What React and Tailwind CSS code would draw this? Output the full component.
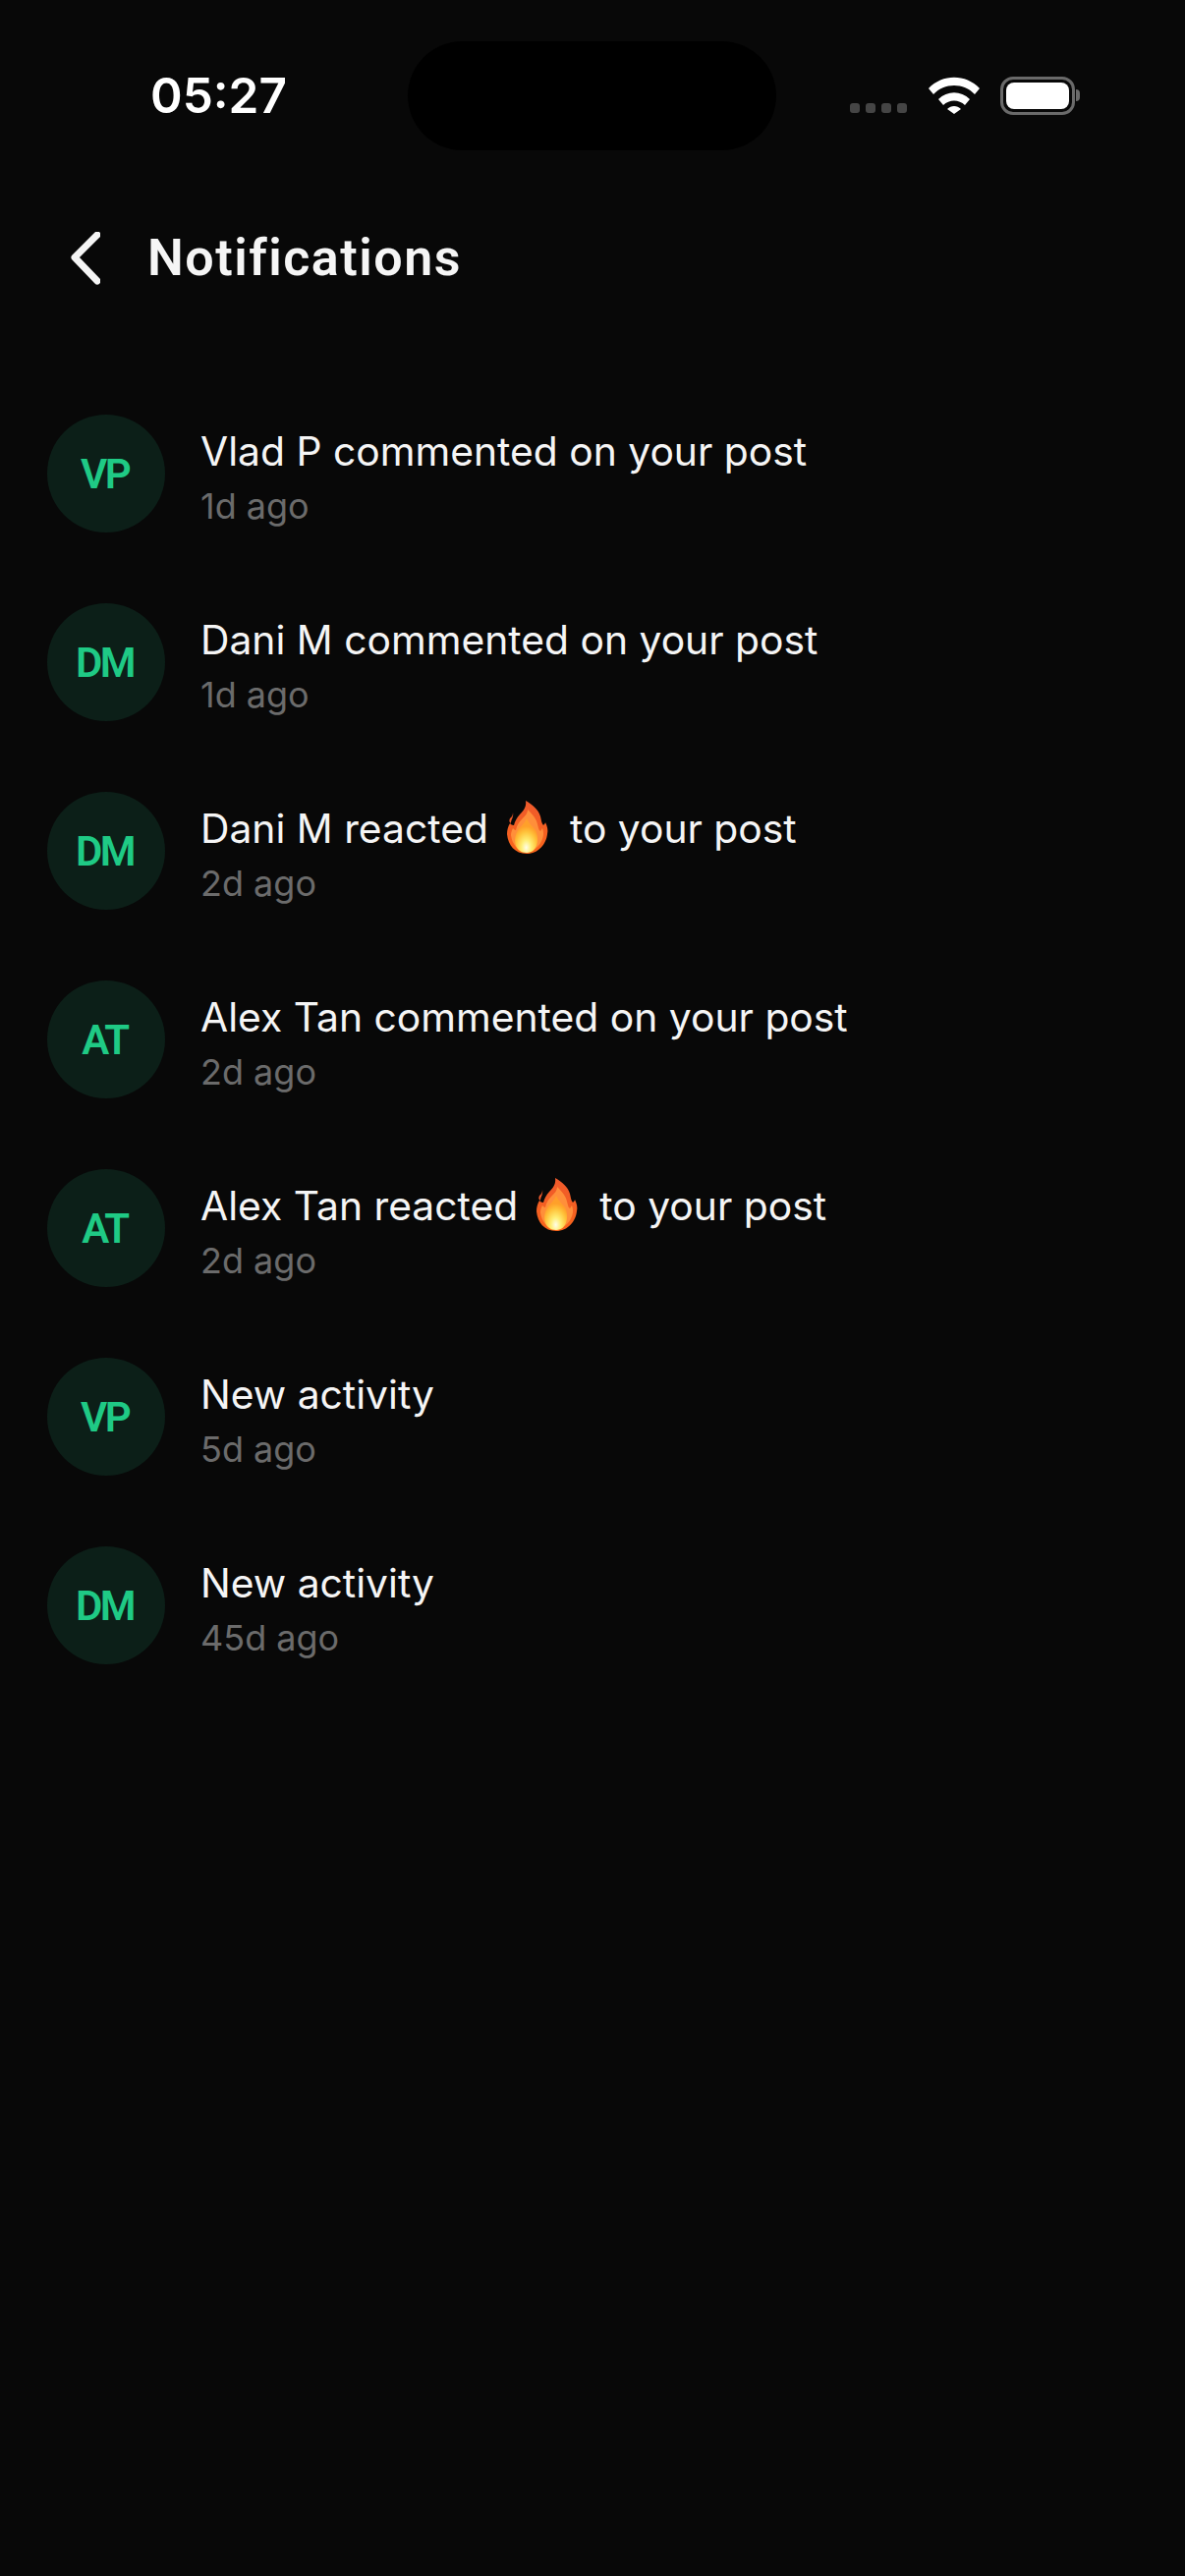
const items = [
  { initials: "VP", before: "Vlad P commented on your post", time: "1d ago" },
  { initials: "DM", before: "Dani M commented on your post", time: "1d ago" },
  { initials: "DM", before: "Dani M reacted", after: "to your post", time: "2d ago" },
  { initials: "AT", before: "Alex Tan commented on your post", time: "2d ago" },
  { initials: "AT", before: "Alex Tan reacted", after: "to your post", time: "2d ago" },
  { initials: "VP", before: "New activity", time: "5d ago" },
  { initials: "DM", before: "New activity", time: "45d ago" },
];

function Flame() {
  return (
    <svg width="42" height="54" viewBox="0 0 42 54" className="ml-[19px] mr-[22px] shrink-0 mb-[4px]">
      <defs>
        <radialGradient id="flameCore" cx="0.5" cy="0.85" r="0.62">
          <stop offset="0" stopColor="#fffde8" />
          <stop offset="0.35" stopColor="#ffee75" />
          <stop offset="0.75" stopColor="#ffc23a" />
          <stop offset="1" stopColor="#ffa02a" />
        </radialGradient>
        <linearGradient id="flameEdge" x1="0" y1="0" x2="0" y2="1">
          <stop offset="0" stopColor="#ef5a2c" />
          <stop offset="1" stopColor="#f8641a" />
        </linearGradient>
      </defs>
      <path d="M6 12c0 3-1 4-3 6-1 2-1 4 1 5 0-4 3-6 2-11z" fill="#ef5a2c" />
      <path
        d="M19 0c7 4 13 9 15 16 1 4 1 7 3 9 1-1 2-2 2-3 2 4 3 8 2 12-1 10-9 20-21 20S1 45 0 34c0-4 1-8 3-11 1 1 2 2 4 2 1-4 3-8 6-11 4-4 7-8 6-14z"
        fill="url(#flameEdge)"
      />
      <path
        d="M21 9c4 4 9 9 10 15 1 3 1 6 3 7 1-1 1-2 2-3 1 2 1 5 1 7-1 8-8 17-17 17S5 44 4 35c0-3 1-5 2-7 1 1 2 2 3 2 1-5 3-8 6-11 3-3 6-6 6-10z"
        fill="#ff8f3a"
      />
      <path
        d="M20 18c2 5 6 8 9 12 4 7 3 23-9 23S6 40 10 32c2-5 8-8 10-14z"
        fill="url(#flameCore)"
      />
    </svg>
  );
}

function Row({ item }) {
  return (
    <div className="flex items-center gap-[36px]">
      <div className="w-[120px] h-[120px] rounded-full bg-[#0c1f18] flex items-center justify-center shrink-0 pr-[3px]">
        <span className="text-[#1fca85] text-[42px] font-semibold tracking-[-2.5px] font-['Roboto',sans-serif]">{item.initials}</span>
      </div>
      <div className="flex flex-col mt-[7px]">
        <div className="flex items-center h-[58px] text-[40.8px] text-[#f5f5f5] font-['Inter',sans-serif]">
          <span>{item.before}</span>
          {item.after && <Flame />}
          {item.after && <span>{item.after}</span>}
        </div>
        <div className="h-[52px] flex items-center text-[36px] text-[#6b6b6b] font-['Inter',sans-serif]">{item.time}</div>
      </div>
    </div>
  );
}

export default function App() {
  return (
    <div className="w-[1206px] h-[2622px] bg-[#080808] font-['Inter',sans-serif]">
      {/* status bar */}
      <div className="flex items-center h-[112px] pt-[41px] box-content">
        <div className="w-[415px] pl-[153px] pt-[2px] text-[49.5px] font-semibold text-white leading-none">05:27</div>
        <div className="w-[375px] h-[111px] rounded-full bg-black shrink-0" />
        <div className="flex items-center pl-[75px]">
          <div className="flex gap-[6px] mt-[26px]">
            <span className="w-[10px] h-[10px] rounded-[3px] bg-[#454545]" />
            <span className="w-[10px] h-[10px] rounded-[3px] bg-[#454545]" />
            <span className="w-[10px] h-[10px] rounded-[3px] bg-[#454545]" />
            <span className="w-[10px] h-[10px] rounded-[3px] bg-[#454545]" />
          </div>
          <svg width="52" height="38" viewBox="0 0 52 38" className="ml-[22px]">
            <path d="M0 12C14 -3 38 -3 52 12l-5 6C36 6 16 6 5 18z" fill="#fff" />
            <path d="M10 23c9-9 23-9 32 0l-5 6c-6-6-16-6-22 0z" fill="#fff" />
            <path d="M19 33c4-4 10-4 14 0l-7 5z" fill="#fff" />
          </svg>
          <div className="flex items-center ml-[21px]">
            <div className="w-[76px] h-[39px] rounded-[13px] border-[3px] border-[#6a6a6a] p-[3px]">
              <div className="w-full h-full rounded-[8px] bg-white" />
            </div>
            <div className="w-[4px] h-[12px] ml-[1px] rounded-r-full bg-[#6a6a6a]" />
          </div>
        </div>
      </div>

      {/* header */}
      <div className="flex items-center mt-[82px] pl-[72px] h-[56px]">
        <svg width="30" height="54" viewBox="0 0 30 54" fill="none">
          <path d="M27 3L4 26l23 24" stroke="#f5f5f5" strokeWidth="7" strokeLinecap="round" strokeLinejoin="round" />
        </svg>
        <h1 className="ml-[48px] text-[52px] font-semibold text-[#f5f5f5] font-['Roboto',sans-serif] tracking-[1.5px]">Notifications</h1>
      </div>

      {/* list */}
      <div className="flex flex-col gap-[72px] mt-[131px] pl-[48px]">
        {items.map((item, i) => (
          <Row key={i} item={item} />
        ))}
      </div>
    </div>
  );
}
